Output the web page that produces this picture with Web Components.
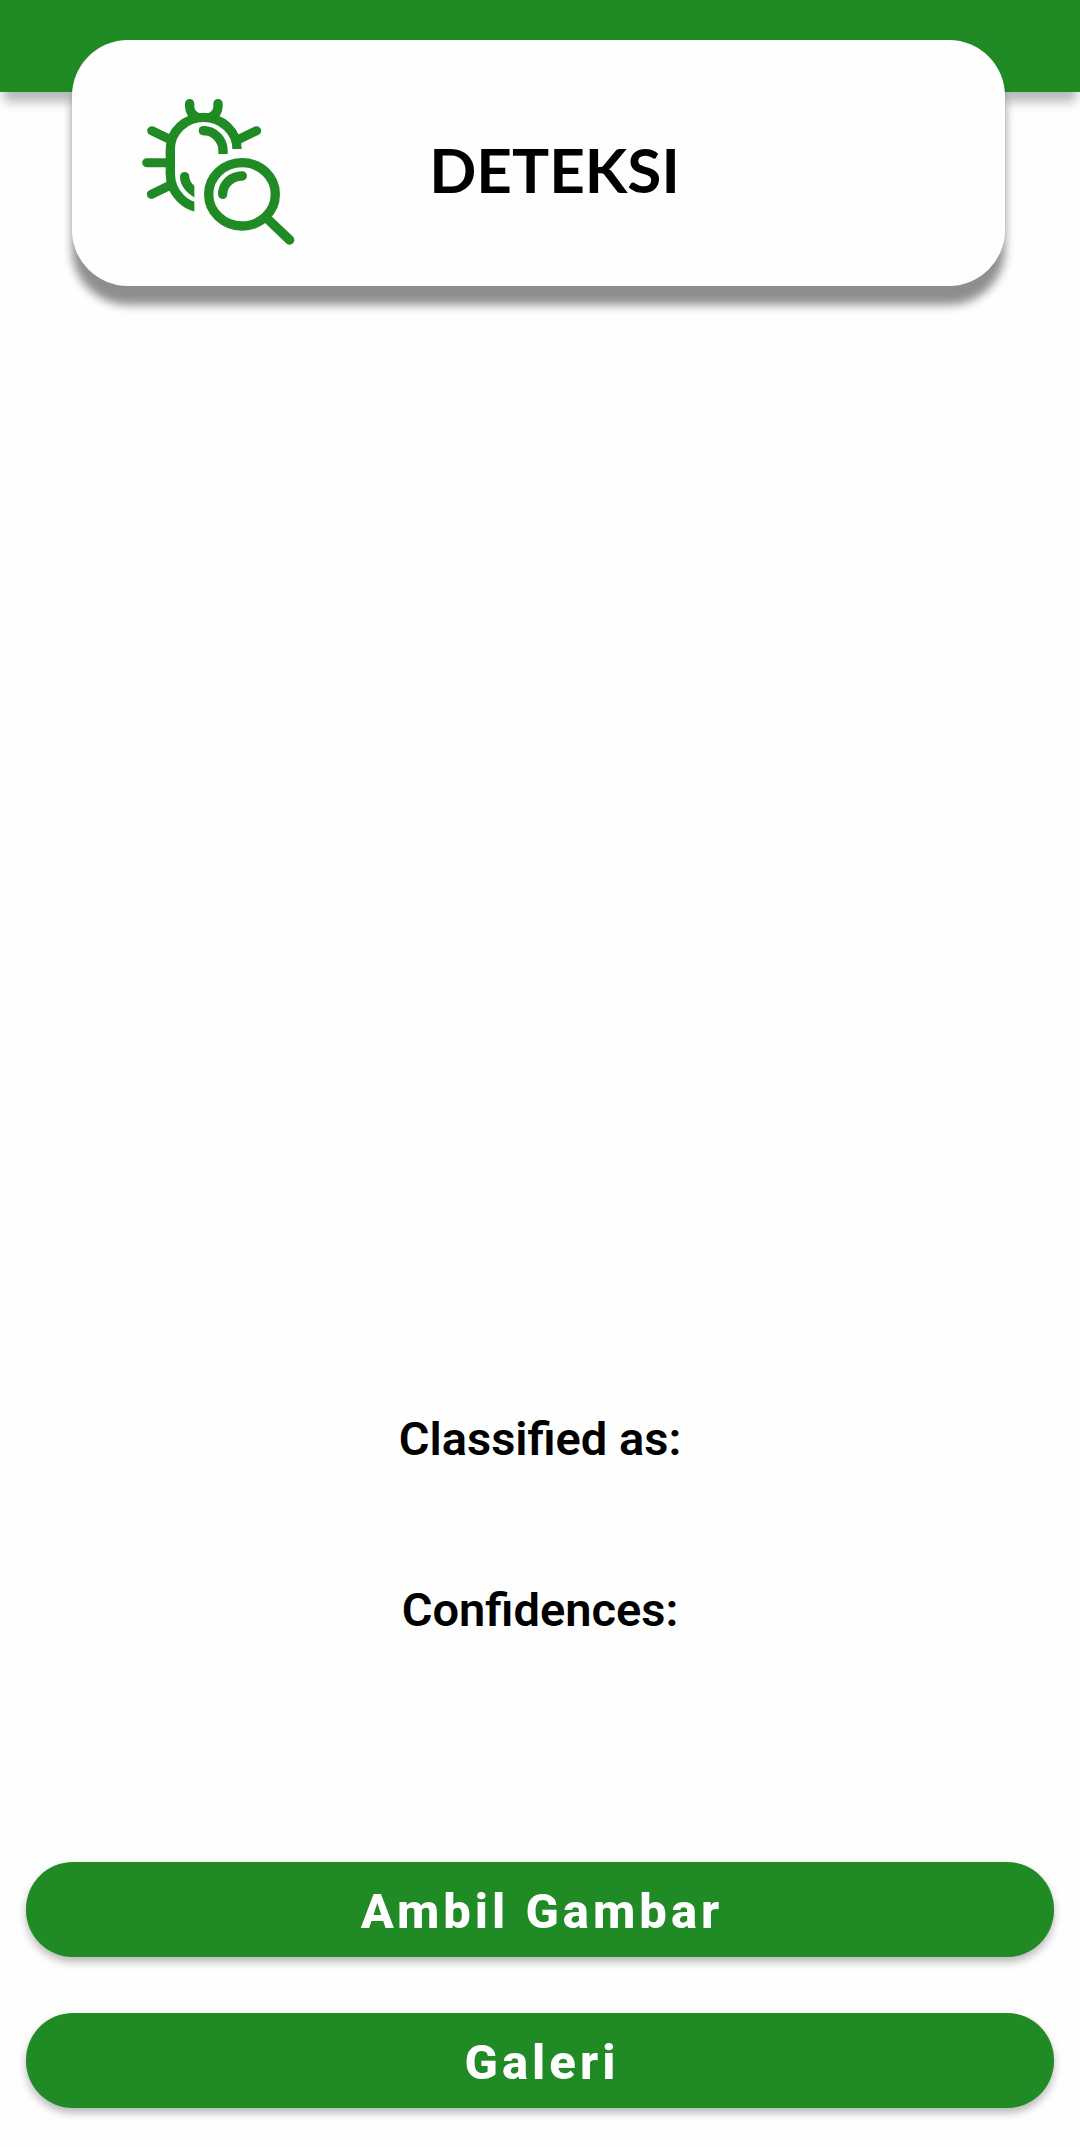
<!DOCTYPE html>
<html lang="id">
<head>
<meta charset="utf-8">
<meta name="viewport" content="width=device-width, initial-scale=1">
<title>Deteksi</title>
<style>
  body { margin: 0; background: #fefefe; color: #000; font-family: Roboto, "Liberation Sans", sans-serif; }
</style>
</head>
<body>
<detect-screen>
  <title-card slot="header">DETEKSI<bug-search-icon slot="icon"></bug-search-icon></title-card>
  <result-label slot="results">Classified as:</result-label>
  <result-label slot="results">Confidences:</result-label>
  <pill-button slot="actions">Ambil Gambar</pill-button>
  <pill-button slot="actions">Galeri</pill-button>
</detect-screen>
<script>
  class BaseElement extends HTMLElement {
    constructor() {
      super();
      this.attachShadow({ mode: "open" }).innerHTML = this.constructor.markup;
    }
  }

  customElements.define("detect-screen", class extends BaseElement {
    static markup = `
      <style>
        :host { display: flex; flex-direction: column; min-height: 100vh; box-sizing: border-box; padding-bottom: 39px; }
        .bar { height: 92px; background: #208a24; box-shadow: 0 14px 10px -4px rgba(0,0,0,.27); }
        header { display: grid; }
        .title { margin: -52px 75px 0 72px; }
        main { flex: 1; display: flex; flex-direction: column; }
        .preview { flex: 1; }
        .results { display: flex; flex-direction: column; gap: 115px; padding-bottom: 224px; }
        .actions { display: flex; flex-direction: column; gap: 56px; padding: 0 26px; }
      </style>
      <header><div class="bar"></div><div class="title"><slot name="header"></slot></div></header>
      <main>
        <div class="preview"></div>
        <div class="results"><slot name="results"></slot></div>
        <div class="actions"><slot name="actions"></slot></div>
      </main>`;
  });

  customElements.define("title-card", class extends BaseElement {
    static markup = `
      <style>
        :host { display: grid; grid-template-columns: 236px 1fr 204px; align-items: center; height: 246px;
          border-radius: 56px; background: #fefefe; box-shadow: 0 19px 10px rgba(0,0,0,.44); }
        .icon { padding: 14px 0 0 58px; }
        h1 { margin: 0; padding-top: 12px; text-align: center; font: 700 62px/72px Lato, sans-serif; }
      </style>
      <div class="icon"><slot name="icon"></slot></div>
      <h1><slot></slot></h1>`;
  });

  customElements.define("bug-search-icon", class extends BaseElement {
    static markup = `
      <style>
        :host { display: block; width: 180px; height: 170px; }
        svg { display: block; width: 100%; height: 100%; }
      </style>
      <svg viewBox="0 0 540 510" fill="none" stroke="#208a24" stroke-width="28" stroke-linecap="round" aria-hidden="true">
        <clipPath id="cut"><rect width="193" height="510"/></clipPath>
        <path stroke-linecap="butt" d="M321 192A100 95 0 0 0 121 192V268"/>
        <path clip-path="url(#cut)" d="M121 266A101 103 0 0 0 222 369"/>
        <path clip-path="url(#cut)" d="M164 275Q164 304 205 328"/>
        <path d="M220 137h2"/>
        <path stroke-linecap="butt" d="M220 137A59 60 0 0 1 279 197V207"/>
        <path d="M179 56V65Q180 85 197 94M264 56V65Q263 85 246 94"/>
        <path fill="#208a24" stroke="none" d="M186 74Q193 84 208 84H235Q250 84 257 74L264 104Q222 88 179 104Z"/>
        <path stroke-width="27" d="M65 137L113 160M50 233H112M64 328L118 302M380 137L326 163"/>
        <ellipse cx="336" cy="328" rx="100" ry="95"/>
        <path d="M278 328A58 55 0 0 1 337 273M414 403L479 465"/>
      </svg>`;
  });

  customElements.define("result-label", class extends BaseElement {
    static markup = `
      <style>
        :host { display: block; }
        p { margin: 0; text-align: center; font-size: 47px; line-height: 56px; font-weight: 600; }
      </style>
      <p><slot></slot></p>`;
  });

  customElements.define("pill-button", class extends BaseElement {
    static markup = `
      <style>
        :host { display: block; }
        button { display: block; width: 100%; height: 95px; margin: 0; padding: 4px 0 0 4px; border: 0; border-radius: 47px;
          background: #208a24; color: #fff; font: 800 49px/60px Roboto, sans-serif; letter-spacing: 4px;
          box-shadow: 0 5px 8px rgba(0,0,0,.28); cursor: pointer; }
      </style>
      <button type="button"><slot></slot></button>`;
  });
</script>
</body>
</html>
